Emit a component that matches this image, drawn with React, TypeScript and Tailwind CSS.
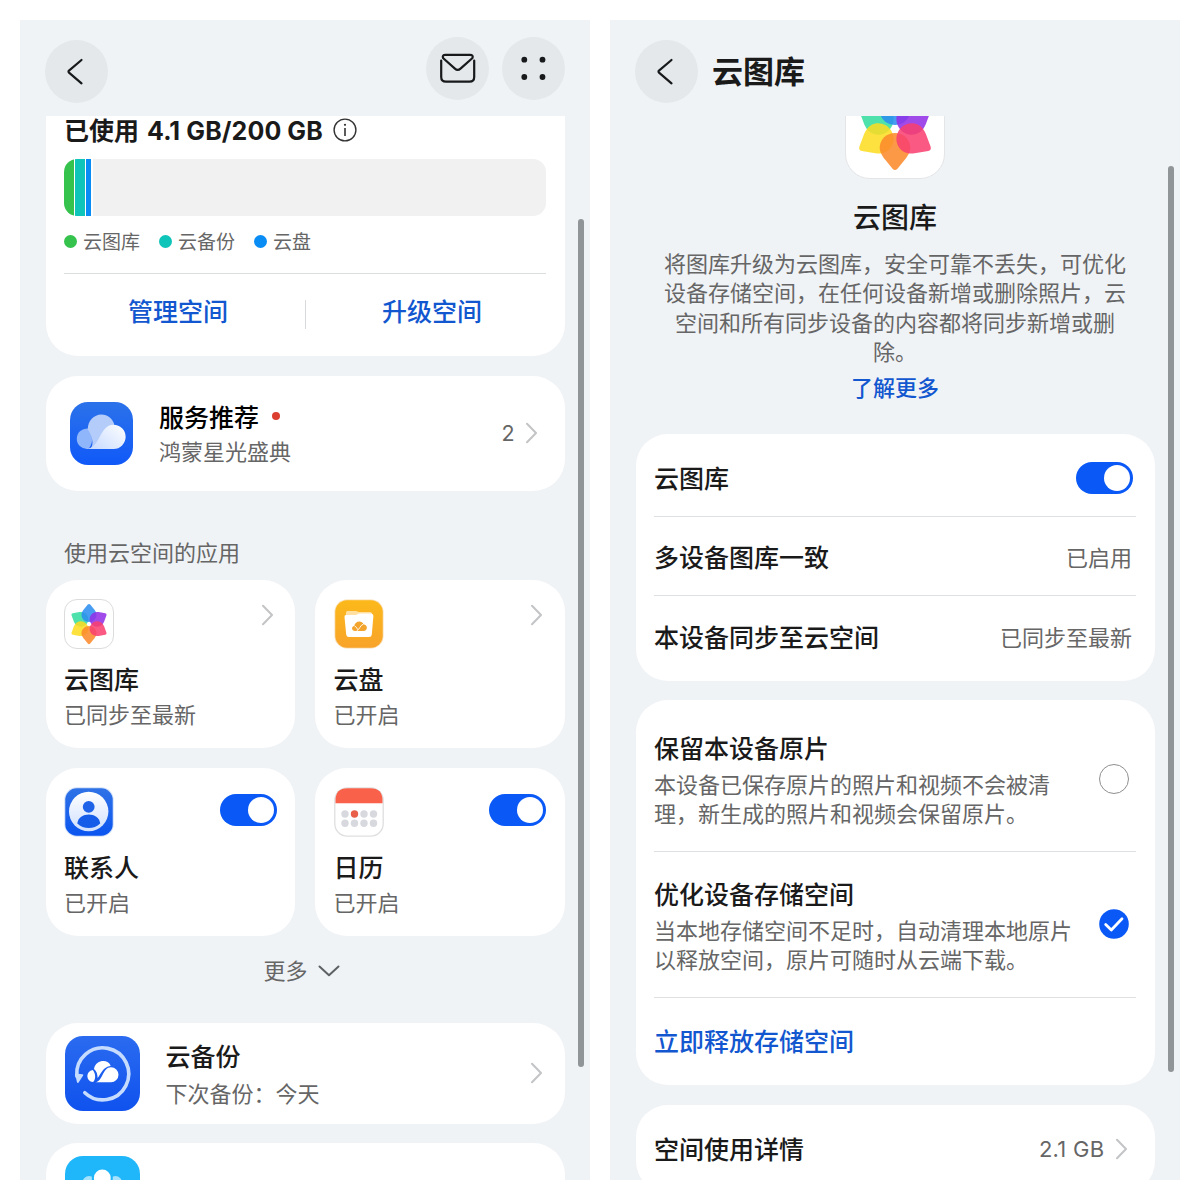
import type { ReactNode } from "react";

const petals = [
  { angle: 300, color: "#35dca0" },
  { angle: 0, color: "#2a8ff0" },
  { angle: 60, color: "#9230e6" },
  { angle: 240, color: "#fbdc22" },
  { angle: 180, color: "#fb8a2c" },
  { angle: 120, color: "#f8406f" },
];

const legend = [
  { label: "云图库", dot: "bg-[#35c24d]" },
  { label: "云备份", dot: "bg-[#0fc4b8]" },
  { label: "云盘", dot: "bg-[#0a8cf5]" },
];

const Flower = ({ className }: { className: string }) => (
  <svg viewBox="0 0 100 100" className={className}>
    {petals.map((p) => (
      <path
        key={p.angle}
        d="M50 46C41.500 46 35 39.500 35 31.500C35 28 36.500 25 39 21.500L47.600 11Q50 8.500 52.400 11L61 21.500C63.500 25 65 28 65 31.500C65 39.500 58.500 46 50 46Z"
        fill={p.color}
        fillOpacity="0.87"
        transform={`rotate(${p.angle} 50 50)`}
      />
    ))}
  </svg>
);

const ChevronRight = () => (
  <svg viewBox="0 0 12 22" className="h-[22px] w-3 shrink-0" fill="none">
    <path d="M1 1.700L10 11L1 20.300" stroke="#c3c4c6" strokeWidth="2" strokeLinecap="round" strokeLinejoin="round" />
  </svg>
);

const Toggle = () => (
  <div className="flex h-8 w-[57px] shrink-0 items-center justify-end rounded-full bg-[#0a59f7] pr-[3px]">
    <div className="size-[26px] rounded-full bg-white" />
  </div>
);

const BackButton = () => (
  <div className="mt-5 flex size-[63px] items-center justify-center rounded-full bg-[#e4e8ea]">
    <svg viewBox="0 0 63 63" className="size-[63px]" fill="none">
      <path d="M36.500 20L24 30.600Q23 31.600 24 32.600L36.500 43.300" stroke="#17191b" strokeWidth="2.200" strokeLinecap="round" strokeLinejoin="round" />
    </svg>
  </div>
);

const DriveIcon = () => (
  <svg viewBox="0 0 50 50" className="size-[50px]">
    <defs>
      <linearGradient id="drive" x1="0" y1="0" x2="0" y2="1">
        <stop offset="0" stopColor="#fcb91a" />
        <stop offset="1" stopColor="#f8a32a" />
      </linearGradient>
    </defs>
    <rect x="0.500" y="0.500" width="49" height="49" rx="12.500" fill="#f9dcae" />
    <rect x="1.300" y="1.300" width="47.400" height="47.400" rx="12" fill="url(#drive)" />
    <path d="M12 17V13.500Q12 12 13.500 12H22L25 13H36Q38 13 38 15V17Z" fill="#ffe0a0" />
    <path d="M12 16H22L25 14.500H37.500Q39.500 15 39.400 17L37.800 35.500Q37.600 38 35 38H15Q12.400 38 12.200 35.500L10.500 18Q10.300 16 12 16Z" fill="#fff" />
    <path d="M21 32C17.500 32 17 27.500 20.200 27C21 21.500 28 21 29.500 25.200C34 25.500 34 32 29.500 32Z" fill="#f3a42c" />
    <path d="M22.500 32C26 30.500 25.500 26.500 29.500 25M20.500 27Q23 28 23.600 30.600" stroke="#fff" strokeWidth="0.900" fill="none" />
  </svg>
);

const ContactsIcon = () => (
  <svg viewBox="0 0 50 50" className="size-[50px]">
    <defs>
      <linearGradient id="contacts" x1="0" y1="0" x2="0" y2="1">
        <stop offset="0" stopColor="#2f72e6" />
        <stop offset="1" stopColor="#0b55f0" />
      </linearGradient>
      <linearGradient id="contactsDisc" x1="0" y1="0" x2="0" y2="1">
        <stop offset="0" stopColor="#fff" />
        <stop offset="1" stopColor="#cfe0ff" />
      </linearGradient>
    </defs>
    <rect x="0.300" y="0.300" width="49.400" height="49.400" rx="12.500" fill="#cfdff8" />
    <rect x="1.300" y="1.300" width="47.400" height="47.400" rx="11.500" fill="url(#contacts)" />
    <circle cx="24.700" cy="24.500" r="19.700" fill="url(#contactsDisc)" />
    <circle cx="24.700" cy="19.800" r="5.900" fill="#1f64e8" />
    <path d="M13.300 36.500C14.500 24.500 35 24.500 36.200 36.500C30 42.500 19.500 42.500 13.300 36.500Z" fill="#155de9" />
  </svg>
);

const CalendarIcon = () => (
  <svg viewBox="0 0 50 50" className="size-[50px]">
    <rect x="0.800" y="0.800" width="48.400" height="48.400" rx="12.500" fill="#fff" stroke="#dfdfe0" strokeWidth="1.300" />
    <path d="M1.500 16.300V13.500Q1.500 1.300 13.500 1.300H36.500Q48.500 1.300 48.500 13.500V16.300Z" fill="#f9614a" />
    {[11, 20.5, 30, 39.5].map((x) => (
      <g key={x}>
        <circle cx={x} cy="27" r="3.700" fill={x === 20.5 ? "#e8604a" : "#d8d9df"} />
        <circle cx={x} cy="36.300" r="3.700" fill="#d8d9df" />
      </g>
    ))}
  </svg>
);

const ServiceIcon = () => (
  <svg viewBox="0 0 63 63" className="size-[63px]">
    <defs>
      <linearGradient id="service" x1="0" y1="0" x2="0" y2="1">
        <stop offset="0" stopColor="#2b72ea" />
        <stop offset="1" stopColor="#1059f8" />
      </linearGradient>
      <linearGradient id="serviceFront" x1="0" y1="1" x2="1" y2="0.300">
        <stop offset="0" stopColor="#c3d7ff" />
        <stop offset="1" stopColor="#f7faff" />
      </linearGradient>
    </defs>
    <rect width="63" height="63" rx="18" fill="url(#service)" />
    <path d="M18 47A10.300 10.300 0 1 1 18.200 26.500Q22.500 29 22 39Q21 45 18 47Z" fill="#8fb5fb" />
    <path d="M20 47C25 43 21.500 32 17.800 27.500C17.500 19 24 12.500 31.300 12.500C38 12.500 43 17 44.300 22.700C34 25 33 44 20 47Z" fill="#b4ccfa" />
    <path d="M16 47C31 46 29 22.700 43.500 22.700A12.150 12.150 0 0 1 43.500 47Z" fill="url(#serviceFront)" />
  </svg>
);

const BackupIcon = () => (
  <svg viewBox="0 0 75 75" className="size-[75px]">
    <defs>
      <linearGradient id="backup" x1="0" y1="0" x2="0" y2="1">
        <stop offset="0" stopColor="#2b6bf0" />
        <stop offset="1" stopColor="#0f52ee" />
      </linearGradient>
    </defs>
    <rect width="75" height="75" rx="18" fill="url(#backup)" />
    <path d="M19.800 56.700A26 26 0 1 0 11.800 40" fill="none" stroke="#c6dcff" strokeWidth="3.600" strokeLinecap="round" />
    <path d="M10 37.500L17.500 38.300Q18.700 38.600 18 39.700L13.600 46.500Q12.600 47.700 12 46.300Z" fill="#c6dcff" />
    <path d="M27.800 34C20.500 35 20.500 45.500 28 46C31 43.500 30.800 37.500 27.800 34Z" fill="#fff" />
    <path d="M29 33C30.500 23.500 43.500 22.500 45.700 30C37.500 31 36.500 37.500 32.600 42C32.600 38 31.500 35.300 29 33Z" fill="#fff" />
    <path d="M30.500 46.200C38 45 37.500 31.300 46 31.200A7.500 7.500 0 0 1 46 46.200Z" fill="#fff" />
  </svg>
);

const FamilyIcon = () => (
  <svg viewBox="0 0 75 75" className="size-[75px] shrink-0">
    <rect width="75" height="75" rx="18" fill="#1fb6fa" />
    <circle cx="24" cy="26.500" r="6.500" fill="#a5e2fd" />
    <circle cx="50.500" cy="26.500" r="6.500" fill="#a5e2fd" />
    <circle cx="37.300" cy="22" r="10.500" fill="#1fb6fa" />
    <circle cx="37.300" cy="22" r="8.400" fill="#fff" />
    <path d="M22 55Q22 34 37.300 34T52.500 55Z" fill="#fff" />
  </svg>
);

const GalleryIcon = () => (
  <div className="flex size-[50px] items-center justify-center rounded-[13px] border border-[#dcdcdd] bg-white">
    <Flower className="size-[50px] shrink-0" />
  </div>
);

const apps = [
  { name: "云图库", status: "已同步至最新", icon: <GalleryIcon />, toggle: false },
  { name: "云盘", status: "已开启", icon: <DriveIcon />, toggle: false },
  { name: "联系人", status: "已开启", icon: <ContactsIcon />, toggle: true },
  { name: "日历", status: "已开启", icon: <CalendarIcon />, toggle: true },
];

const Latin = ({ children, className = "" }: { children: ReactNode; className?: string }) => (
  <span className={`font-['Inter',sans-serif] ${className}`}>{children}</span>
);

const CloudSpace = () => (
  <section className="relative flex h-[1160px] w-[570px] flex-col overflow-hidden bg-[#f0f3f6]">
    <header className="flex h-24 shrink-0 items-start px-[25px]">
      <BackButton />
      <div className="mt-[17px] ml-auto flex gap-[13px]">
        <div className="size-[63px] rounded-full bg-[#e4e8ea]">
          <svg viewBox="0 0 63 63" className="size-[63px]" fill="none" stroke="#17191b" strokeWidth="2.200" strokeLinecap="round" strokeLinejoin="round">
            <path d="M15.200 23.500V40Q15.200 44.700 20 44.700H43.500Q48.200 44.700 48.200 40V23.500" />
            <path d="M17 21Q16 17.800 19.500 17.800H44Q47.500 17.800 46.500 21L34.500 31.600Q31.700 34 28.900 31.600Z" />
          </svg>
        </div>
        <div className="size-[63px] rounded-full bg-[#e4e8ea]">
          <svg viewBox="0 0 63 63" className="size-[63px]" fill="#17191b">
            <circle cx="22.300" cy="22.700" r="2.900" />
            <circle cx="40.500" cy="22.700" r="2.900" />
            <circle cx="22.300" cy="40" r="2.900" />
            <circle cx="40.500" cy="40" r="2.900" />
          </svg>
        </div>
      </div>
    </header>

    <div className="flex min-h-0 flex-1 flex-col overflow-hidden px-[25.500px]">
      {/* storage usage */}
      <div className="h-[239.500px] shrink-0 rounded-b-[32px] bg-white px-[18.500px]">
        <div className="flex h-[26px] items-center text-[25px] leading-[26px] font-bold text-[#1a1a1a]">
          <span>已使用</span>
          <Latin className="mt-[3px] ml-2 text-[25px] tracking-[0.100px]">4.1 GB/200 GB</Latin>
          <svg viewBox="0 0 24 24" className="mt-[2px] ml-[10px] size-6" fill="none" stroke="#333" strokeWidth="1.400">
            <circle cx="12" cy="12" r="10.900" />
            <path d="M12 10V18" strokeWidth="1.600" />
            <circle cx="12" cy="6.800" r="1.100" fill="#333" stroke="none" />
          </svg>
        </div>
        <div className="mt-[17px] flex h-[57px] overflow-hidden rounded-[13px] bg-[#f1f1f1]">
          <div className="flex gap-px bg-white pr-[2px]">
            <div className="w-[10px] rounded-l-[12px] bg-[#35c24d]" />
            <div className="w-[10px] bg-[#0fc4b8]" />
            <div className="w-[5px] bg-[#0a8cf5]" />
          </div>
        </div>
        <div className="mt-[13px] flex h-6 gap-[19px]">
          {legend.map((item) => (
            <div key={item.label} className="flex items-center gap-[6px] text-[19px] leading-6 text-[#666]">
              <span className={`size-[13px] rounded-full ${item.dot}`} />
              {item.label}
            </div>
          ))}
        </div>
        <div className="mt-5 h-px bg-[#dcdddd]" />
        <div className="mt-[21px] flex items-start text-[25px] leading-[30px] font-medium text-[#1257cf]">
          <div className="w-[241px] pr-[13px] text-center">管理空间</div>
          <div className="mt-[5px] h-[29px] w-px bg-[#d9dadb]" />
          <div className="flex-1 pl-[12px] text-center">升级空间</div>
        </div>
      </div>

      {/* service recommendation */}
      <div className="mt-5 flex h-[115.500px] shrink-0 items-center rounded-[32px] bg-white pr-[27px] pl-[24.500px]">
        <ServiceIcon />
        <div className="ml-[26px] flex-1">
          <div className="flex items-center text-[25px] leading-[34px] font-medium text-black">
            服务推荐
            <span className="ml-[12.500px] size-2 rounded-full bg-[#dc3f30]" />
          </div>
          <div className="text-[22px] leading-[34px] text-[#666]">鸿蒙星光盛典</div>
        </div>
        <Latin className="mr-[11px] text-[21.500px] text-[#666]">2</Latin>
        <ChevronRight />
      </div>

      <h2 className="mt-[45px] pl-[18.500px] text-[22px] leading-[30px] text-[#666]">使用云空间的应用</h2>

      <div className="mt-[13.500px] grid shrink-0 grid-cols-2 gap-5">
        {apps.map((app) => (
          <div key={app.name} className="h-[168px] rounded-[32px] bg-white px-[18.500px] pt-[19px]">
            <div className="flex justify-between">
              {app.icon}
              {app.toggle ? (
                <div className="pt-[7px]">
                  <Toggle />
                </div>
              ) : (
                <div className="pt-[5px] pr-[3px]">
                  <ChevronRight />
                </div>
              )}
            </div>
            <div className="mt-[12.500px] text-[25px] leading-[34px] font-medium text-[#1a1a1a]">{app.name}</div>
            <div className="mt-[2px] text-[22px] leading-[32px] text-[#666]">{app.status}</div>
          </div>
        ))}
      </div>

      <div className="mt-[18px] flex h-[30px] shrink-0 items-center justify-center gap-[10px] pr-[7px] text-[22px] leading-[30px] text-[#666]">
        更多
        <svg viewBox="0 0 22 12" className="mt-1 h-3 w-[22px]" fill="none">
          <path d="M1.500 1.500L11 10.300L20.500 1.500" stroke="#5e6163" strokeWidth="2" strokeLinecap="round" strokeLinejoin="round" />
        </svg>
      </div>

      {/* backup */}
      <div className="mt-[39.500px] flex h-[100.500px] shrink-0 items-center rounded-[32px] bg-white pr-[21.500px] pl-[19px]">
        <BackupIcon />
        <div className="ml-[26px] flex-1">
          <div className="text-[25px] leading-[36px] font-medium text-[#1a1a1a]">云备份</div>
          <div className="mt-px text-[22px] leading-[36px] text-[#666]">下次备份：今天</div>
        </div>
        <ChevronRight />
      </div>

      <div className="mt-[19.500px] flex h-[100px] shrink-0 items-center rounded-[32px] bg-white pl-[19px]">
        <FamilyIcon />
      </div>
    </div>

    <div className="absolute top-[199px] right-[6px] h-[848px] w-[6.500px] rounded-full bg-[#909598]" />
  </section>
);

const Gallery = () => (
  <section className="relative flex h-[1160px] w-[570px] flex-col overflow-hidden bg-[#f0f3f6]">
    <header className="flex h-24 shrink-0 items-start px-[25px]">
      <BackButton />
      <h1 className="mt-[30px] ml-[14px] text-[31px] leading-10 font-bold text-[#1a1a1a]">云图库</h1>
    </header>

    <div className="flex min-h-0 flex-1 flex-col overflow-hidden px-[25.500px]">
      <div className="flex h-[63px] shrink-0 items-end justify-center overflow-hidden">
        <div className="flex size-[100px] shrink-0 items-center justify-center rounded-[25px] border border-[#e3e5e7] bg-white">
          <Flower className="size-[102px] shrink-0" />
        </div>
      </div>
      <div className="mt-[17px] text-center text-[28px] leading-10 font-medium text-[#1a1a1a]">云图库</div>
      <div className="mt-[11.500px] text-center text-[22px] leading-[29.500px] text-[#666]">
        <p>将图库升级为云图库，安全可靠不丢失，可优化</p>
        <p>设备存储空间，在任何设备新增或删除照片，云</p>
        <p>空间和所有同步设备的内容都将同步新增或删</p>
        <p>除。</p>
      </div>
      <div className="mt-[5.500px] text-center text-[22px] leading-[30px] font-medium text-[#1257cf]">了解更多</div>

      <div className="mt-[33px] flex h-[247px] shrink-0 flex-col rounded-[32px] bg-white px-[18.500px] text-[22px] text-[#666]">
        <div className="flex h-[82px] items-center justify-between pt-[6px] pr-[3px]">
          <span className="text-[25px] font-medium text-[#1a1a1a]">云图库</span>
          <Toggle />
        </div>
        <div className="h-px bg-[#dfe0e1]" />
        <div className="flex h-[78px] items-center justify-between pr-1">
          <span className="pt-px text-[25px] font-medium text-[#1a1a1a]">多设备图库一致</span>
          <span>已启用</span>
        </div>
        <div className="h-px bg-[#dfe0e1]" />
        <div className="flex h-[80px] items-center justify-between pr-1">
          <span className="pt-px text-[25px] font-medium text-[#1a1a1a]">本设备同步至云空间</span>
          <span>已同步至最新</span>
        </div>
      </div>

      <div className="mt-[19px] h-[385px] shrink-0 rounded-[32px] bg-white px-[18.500px] text-[22px] leading-[29.500px] text-[#666]">
        <div className="flex h-[151px] justify-between pt-[30px] pr-[7px]">
          <div>
            <div className="text-[25px] leading-[34px] font-medium text-[#1a1a1a]">保留本设备原片</div>
            <p className="mt-[4.500px]">本设备已保存原片的照片和视频不会被清</p>
            <p>理，新生成的照片和视频会保留原片。</p>
          </div>
          <div className="mt-[34px] size-[30px] rounded-full border-[1.500px] border-[#8f8f90]" />
        </div>
        <div className="h-px bg-[#dfe0e1]" />
        <div className="flex h-[145px] justify-between pt-[23.500px] pr-[7px]">
          <div>
            <div className="text-[25px] leading-[34px] font-medium text-[#1a1a1a]">优化设备存储空间</div>
            <p className="mt-[5px]">当本地存储空间不足时，自动清理本地原片</p>
            <p>以释放空间，原片可随时从云端下载。</p>
          </div>
          <svg viewBox="0 0 30 30" className="mt-[33.500px] size-[30px]" fill="none">
            <circle cx="15" cy="15" r="14.800" fill="#0a59f7" />
            <path d="M6.700 15.500L12.300 21L23 9.800" stroke="#fff" strokeWidth="2.800" strokeLinecap="round" strokeLinejoin="round" />
          </svg>
        </div>
        <div className="h-px bg-[#dfe0e1]" />
        <div className="flex h-[87px] items-center pb-px text-[25px] font-medium text-[#1257cf]">立即释放存储空间</div>
      </div>

      <div className="mt-5 flex h-[88px] shrink-0 items-center rounded-[32px] bg-white pr-[27px] pl-[18.500px]">
        <span className="flex-1 text-[25px] font-medium text-[#1a1a1a]">空间使用详情</span>
        <Latin className="mr-[11px] text-[22px] tracking-[0.300px] text-[#666]">2.1 GB</Latin>
        <ChevronRight />
      </div>
    </div>

    <div className="absolute top-[146px] right-[6px] h-[906px] w-[6.500px] rounded-full bg-[#909598]" />
  </section>
);

const App = () => {
  return (
    <main className="flex size-[1200px] gap-5 overflow-hidden bg-white p-5 font-['Noto_Sans_CJK_SC',sans-serif]">
      <CloudSpace />
      <Gallery />
    </main>
  );
};

export default App;
